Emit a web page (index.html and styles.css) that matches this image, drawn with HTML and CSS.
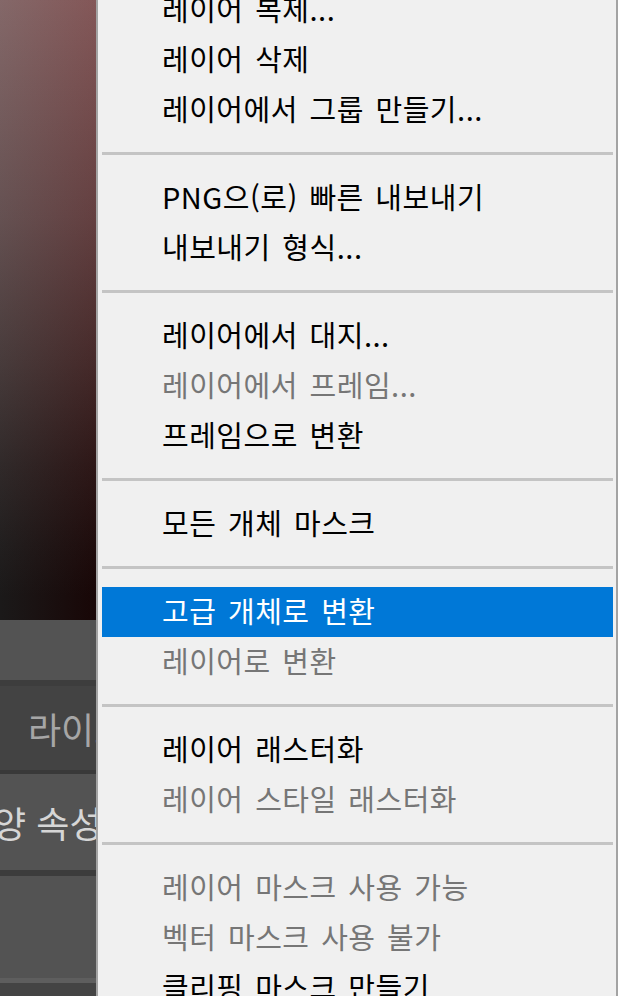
FILE: index.html
```html
<!DOCTYPE html>
<html lang="ko">
<head>
    <meta charset="UTF-8">
    <meta name="viewport" content="width=device-width, initial-scale=1.0">
    <title>레이어 메뉴</title>
    <link rel="stylesheet" href="styles.css">
</head>
<body>
    <div class="workspace">
        <div class="side">
            <div class="canvas"></div>
            <div class="bar bar-top"></div>
            <div class="tab tab-dim"><span>라이브러리</span></div>
            <div class="tab tab-props"><span>모양 속성</span></div>
            <div class="bar bar-empty"></div>
            <div class="bar bar-bottom"></div>
        </div>

        <div class="menu">
            <ul class="menu-list">
                <li class="item">레이어 복제...</li>
                <li class="item">레이어 삭제</li>
                <li class="item">레이어에서 그룹 만들기...</li>
                <li class="sep"></li>
                <li class="item">PNG으(로) 빠른 내보내기</li>
                <li class="item">내보내기 형식...</li>
                <li class="sep"></li>
                <li class="item">레이어에서 대지...</li>
                <li class="item disabled">레이어에서 프레임...</li>
                <li class="item">프레임으로 변환</li>
                <li class="sep"></li>
                <li class="item">모든 개체 마스크</li>
                <li class="sep"></li>
                <li class="item active">고급 개체로 변환</li>
                <li class="item disabled">레이어로 변환</li>
                <li class="sep"></li>
                <li class="item">레이어 래스터화</li>
                <li class="item disabled">레이어 스타일 래스터화</li>
                <li class="sep"></li>
                <li class="item disabled">레이어 마스크 사용 가능</li>
                <li class="item disabled">벡터 마스크 사용 불가</li>
                <li class="item">클리핑 마스크 만들기</li>
            </ul>
        </div>
    </div>
</body>
</html>
```

FILE: styles.css
```css
html, body {
    margin: 0;
    padding: 0;
    height: 996px;
    overflow: hidden;
    background-color: #f0f0f0;
}
.workspace {
    display: flex;
    height: 996px;
    font-family: "Noto Sans CJK KR", "Noto Sans", sans-serif;
}

/* left: photoshop panels behind the menu */
.side {
    width: 96px;
    flex-shrink: 0;
    display: flex;
    flex-direction: column;
    overflow: hidden;
}
.canvas {
    height: 620px;
    background:
        linear-gradient(to right, rgba(150,140,140,0.18), rgba(150,40,40,0.16)),
        linear-gradient(to bottom, #806061 0%, #5a4445 35%, #372a2a 58%, #1a1414 75%, #080707 88%, #000 96%);
}
.bar {
    background-color: #535353;
}
.bar-top {
    height: 60px;
    border-bottom: 6px solid #3d3d3d;
}
.tab {
    display: flex;
    align-items: center;
    white-space: nowrap;
    font-size: 36px;
}
.tab-dim {
    height: 84px;
    background-color: #434343;
    border-bottom: 4px solid #393939;
    color: #a6a6a6;
    padding-left: 28px;
}
.tab-props {
    height: 96px;
    background-color: #535353;
    border-bottom: 6px solid #3c3c3c;
    color: #d6d6d6;
}
.tab-props span {
    margin-left: -40px;
}
.bar-empty {
    height: 102px;
    border-bottom: 5px solid #5e5e5e;
}
.bar-bottom {
    flex: 1;
    background-color: #444;
}

/* context menu */
.menu {
    flex: 1;
    background-color: #f0f0f0;
    border-left: 2px solid #a3a3a3;
    border-right: 2px solid #a3a3a3;
    padding: 0 3px 0 4px;
    overflow: hidden;
}
.menu-list {
    list-style: none;
    margin: -15px 0 0;
    padding: 0;
}
.item {
    height: 50px;
    line-height: 46px;
    padding-left: 60px;
    font-size: 29px;
    letter-spacing: 0.5px;
    word-spacing: 3px;
    color: #000;
    white-space: nowrap;
}
.item.disabled {
    color: #767676;
}
.item.active {
    background-color: #0078d7;
    color: #fff;
}
.sep {
    height: 3px;
    margin: 17px 0 18px;
    background-color: #c4c4c4;
}
```
